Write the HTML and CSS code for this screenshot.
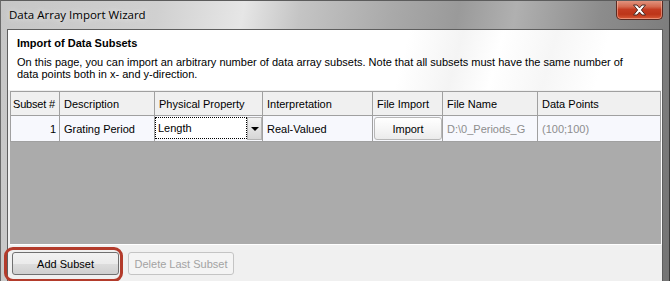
FILE: index.html
```html
<!DOCTYPE html>
<html lang="en">
<head>
  <meta charset="UTF-8">
  <title>Data Array Import Wizard</title>
  <link rel="stylesheet" href="styles.css">
</head>
<body>
  <div class="window">
    <div class="titlebar">
      <span class="title">Data Array Import Wizard</span>
      <div class="close">
        <svg width="15" height="12" viewBox="0 0 15 12">
          <path d="M1.5 1 L5 1 L7.5 3.9 L10 1 L13.5 1 L9.4 6 L13.5 11 L10 11 L7.5 8.1 L5 11 L1.5 11 L5.6 6 Z" fill="#fff" stroke="#4a2a24" stroke-width="1" stroke-linejoin="round"/>
        </svg>
      </div>
    </div>

    <div class="client">
      <div class="intro">
        <h1>Import of Data Subsets</h1>
        <p>On this page, you can import an arbitrary number of data array subsets. Note that all subsets must have the same number of data points both in x- and y-direction.</p>
      </div>

      <div class="grid-wrap">
        <div class="grid">
          <div class="hcell first">Subset #</div>
          <div class="hcell">Description</div>
          <div class="hcell">Physical Property</div>
          <div class="hcell">Interpretation</div>
          <div class="hcell">File Import</div>
          <div class="hcell">File Name</div>
          <div class="hcell">Data Points</div>

          <div class="cell num">1</div>
          <div class="cell">Grating Period</div>
          <div class="cell combo-cell">
            <div class="combo">
              <div class="combo-text">Length</div>
              <div class="combo-btn"><span class="arrow"></span></div>
            </div>
          </div>
          <div class="cell">Real-Valued</div>
          <div class="cell btn-cell"><button class="cell-btn">Import</button></div>
          <div class="cell muted">D:\0_Periods_G</div>
          <div class="cell muted">(100;100)</div>
        </div>
      </div>

      <div class="actions">
        <button class="btn marked">Add Subset</button>
        <button class="btn" disabled>Delete Last Subset</button>
      </div>
    </div>
  </div>
</body>
</html>
```

FILE: styles.css
```css
* {
  box-sizing: border-box;
}

body {
  margin: 0;
  font-family: "Liberation Sans", Arial, sans-serif;
  font-size: 11px;
  color: #000;
}

.window {
  width: 670px;
  height: 281px;
  overflow: hidden;
  display: flex;
  flex-direction: column;
  padding: 0 6px;
  border-left: 1px solid #6a6a6a;
  border-right: 1px solid #3a3a3a;
  border-top: 1px solid #5c5c5c;
  background: linear-gradient(100deg, #c6c6c6 0%, #d0d0d0 22%, #e6e6e6 34%, #c4c4c4 42%, #a9a9a9 55%, #9a9a9a 64%, #b0b0b0 72%, #8c8c8c 84%, #747474 100%);
}

/* title bar */
.titlebar {
  height: 28px;
  display: flex;
  align-items: flex-start;
}

.title {
  font-family: "Open Sans", "Noto Sans", sans-serif;
  font-size: 11.5px;
  color: #000;
  padding: 6px 0 0 2px;
  text-shadow: 0 0 6px rgba(255, 255, 255, 0.9);
}

.close {
  margin: -1px 0 0 auto;
  width: 47px;
  height: 20px;
  display: flex;
  align-items: center;
  justify-content: center;
  border: 1px solid #5a2a22;
  border-top: none;
  border-radius: 0 0 5px 5px;
  background: linear-gradient(#e39a86 0%, #d4694f 35%, #c43c22 50%, #bd3519 75%, #d85a38 100%);
  box-shadow: inset 0 0 0 1px rgba(255, 200, 180, 0.5);
}

.close svg {
  display: block;
}

/* client area */
.client {
  flex: 1;
  display: flex;
  flex-direction: column;
  background: #f0f0f0;
  border: 1px solid #5e5e5e;
  border-bottom: none;
}

.intro {
  height: 60px;
  padding: 7px 22px 0 9px;
  background: linear-gradient(105deg, #fff 0%, #fff 60%, #f4f4f4 68%, #fff 74%, #f6f6f6 82%, #fff 90%);
}

.intro h1 {
  margin: 0;
  font-size: 11px;
  line-height: 13px;
  font-weight: bold;
}

.intro p {
  margin: 6px 0 0;
  line-height: 12px;
}

/* data grid */
.grid-wrap {
  margin: 1px 0 0 2px;
  height: 154px;
  background: #ababab;
  border-right: 1px solid #fff;
  border-bottom: 1px solid #fff;
}

.grid {
  display: grid;
  grid-template-columns: 49px 95px 108px 110px 70px 95px 123px;
  grid-template-rows: 24px 26px;
  border-left: 1px solid #a0a0a0;
  border-top: 1px solid #a0a0a0;
}

.hcell,
.cell {
  border-right: 1px solid #a0a0a0;
  border-bottom: 1px solid #a0a0a0;
  padding: 0 4px;
  display: flex;
  align-items: center;
  white-space: nowrap;
  overflow: hidden;
}

.hcell {
  background: #f0f0f0;
}

.hcell.first {
  padding: 0 2px;
  letter-spacing: -0.2px;
}

.cell {
  background: #f7f8fd;
}

.cell.num {
  justify-content: flex-end;
  padding-right: 3px;
}

.cell.muted {
  color: #8d8d8d;
}

.combo-cell {
  padding: 0;
  align-items: flex-start;
}

.combo {
  display: flex;
  width: 100%;
  height: 23px;
  margin-top: 1px;
}

.combo-text {
  flex: 1;
  display: flex;
  align-items: center;
  padding-left: 2px;
  background: #fff;
  border: 1px dotted #000;
  margin-bottom: 1px;
}

.combo-btn {
  width: 15px;
  display: flex;
  align-items: center;
  justify-content: center;
  border: 1px solid #b4b4b4;
  background: linear-gradient(#f3f3f3, #e4e4e4 50%, #d6d6d6);
}

.arrow {
  width: 0;
  height: 0;
  border-left: 4px solid transparent;
  border-right: 4px solid transparent;
  border-top: 4px solid #000;
}

.btn-cell {
  padding: 0 0 0 1px;
}

.cell-btn {
  width: 68px;
  height: 23px;
  font: inherit;
  color: #000;
  border: 1px solid #b8b8b8;
  border-radius: 3px;
  background: linear-gradient(#ffffff, #f6f6f6 50%, #ebebeb);
  padding: 0;
}

/* bottom buttons */
.actions {
  display: flex;
  gap: 9px;
  padding: 7px 0 0 4px;
}

.btn {
  position: relative;
  height: 23px;
  width: 107px;
  padding: 0;
  font: inherit;
  color: #000;
  border: 1px solid #707070;
  border-radius: 3px;
  background: linear-gradient(#f2f2f2 0%, #ebebeb 50%, #dddddd 51%, #cfcfcf 100%);
}

.btn:disabled {
  width: 106px;
  color: #a3a3a3;
  border-color: #c4c4c4;
  background: #f4f4f4;
}

/* red annotation ring around the add button */
.btn.marked::after {
  content: "";
  position: absolute;
  top: -6px;
  left: -9px;
  right: -5px;
  bottom: -8px;
  border: 3px solid #b33b2b;
  border-radius: 9px;
}
```
